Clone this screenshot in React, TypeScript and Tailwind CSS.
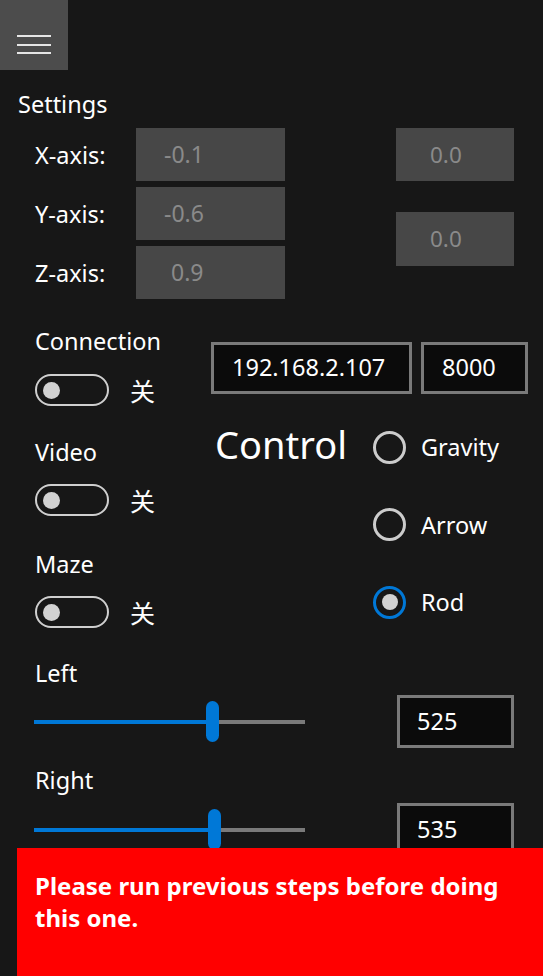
import { useState } from "react";

const font = "font-['Noto_Sans','Noto_Sans_CJK_SC',sans-serif]";

function Toggle() {
  return (
    <div className="flex items-center h-[32px]">
      <div className="w-[74px] h-[32px] rounded-full border-2 border-[#cfcfcf] flex items-center pl-[6px]">
        <div className="w-[17px] h-[17px] rounded-full bg-[#d2d2d2]" />
      </div>
      <span className="ml-[21px] text-[25px] leading-[32px] text-white font-['Noto_Sans_CJK_SC',sans-serif]">关</span>
    </div>
  );
}

function Radio({ label, checked }: { label: string; checked?: boolean }) {
  return (
    <div className="flex items-center h-[40px]">
      {checked ? (
        <div className="w-[33px] h-[33px] rounded-full border-[3.5px] border-[#0078d7] flex items-center justify-center">
          <div className="w-[16px] h-[16px] rounded-full bg-[#d2d2d2]" />
        </div>
      ) : (
        <div className="w-[33px] h-[33px] rounded-full border-[3.5px] border-[#cccccc]" />
      )}
      <span className="ml-[15px] text-[23.5px] leading-[30px]">{label}</span>
    </div>
  );
}

function Slider({ value }: { value: number }) {
  return (
    <div className="ml-[34px] w-[271px] h-[41px] flex items-center">
      <div className="h-[4px] bg-[#0078d7]" style={{ width: value }} />
      <div className="w-[13px] h-[41px] rounded-full bg-[#0078d7]" />
      <div className="h-[4px] flex-1 bg-[#7a7a7a]" />
    </div>
  );
}

function ValueBox({ text }: { text: string }) {
  return (
    <div className="w-[117px] h-[53px] border-[3px] border-[#7a7a7a] bg-[#0b0b0b] flex items-center pl-[17px] text-[23.5px]">
      {text}
    </div>
  );
}

export default function App() {
  const [mode] = useState("Rod");
  const axes = [
    { label: "X-axis:", value: "-0.1", pad: "pl-[28px]" },
    { label: "Y-axis:", value: "-0.6", pad: "pl-[28px]" },
    { label: "Z-axis:", value: "0.9", pad: "pl-[35px]" },
  ];

  return (
    <div className={`relative w-full h-[976px] overflow-hidden bg-[#171717] text-white ${font}`}>
      {/* hamburger */}
      <div className="w-[68px] h-[70px] bg-[#4c4c4c] pt-[35px] pl-[17px] flex flex-col gap-[6.5px]">
        <div className="w-[34px] h-[2px] bg-[#e6e6e6]" />
        <div className="w-[34px] h-[2px] bg-[#e6e6e6]" />
        <div className="w-[34px] h-[2px] bg-[#e6e6e6]" />
      </div>

      <div className="mt-[19px] pl-[18px] text-[23.5px] leading-[30px]">Settings</div>

      {/* axes */}
      <div className="mt-[9px] flex">
        <div className="pl-[35px] flex flex-col gap-[6px]">
          {axes.map((a) => (
            <div key={a.label} className="flex items-center">
              <div className="w-[101px] text-[23.5px] leading-[30px]">{a.label}</div>
              <div className={`w-[149px] h-[53px] bg-[#474747] flex items-center ${a.pad} text-[23px] text-[#8a8a8a]`}>
                {a.value}
              </div>
            </div>
          ))}
        </div>
        <div className="ml-[111px] flex flex-col gap-[31px]">
          <div className="w-[118px] h-[53px] bg-[#474747] flex items-center pl-[34px] text-[22.5px] text-[#8a8a8a]">0.0</div>
          <div className="w-[118px] h-[54px] bg-[#474747] flex items-center pl-[34px] text-[22.5px] text-[#8a8a8a]">0.0</div>
        </div>
      </div>

      {/* connection + control */}
      <div className="mt-[27px] flex">
        <div className="pl-[35px] w-[211px] flex flex-col">
          <div className="text-[23.5px] leading-[30px]">Connection</div>
          <div className="mt-[18px]"><Toggle /></div>
          <div className="mt-[31px] text-[23.5px] leading-[30px]">Video</div>
          <div className="mt-[17px]"><Toggle /></div>
          <div className="mt-[33px] text-[23.5px] leading-[30px]">Maze</div>
          <div className="mt-[17px]"><Toggle /></div>
        </div>
        <div className="flex flex-col">
          <div className="mt-[16px] flex gap-[9px]">
            <div className="w-[201px] h-[52px] border-[3px] border-[#7a7a7a] bg-[#0b0b0b] flex items-center pl-[18px] text-[23.5px]">
              192.168.2.107
            </div>
            <div className="w-[107px] h-[52px] border-[3px] border-[#7a7a7a] bg-[#0b0b0b] flex items-center pl-[18px] text-[23.5px]">
              8000
            </div>
          </div>
          <div className="mt-[33px] flex">
            <div className="w-[162px] pl-[4px] text-[38px] leading-[40px] -mt-[3px]">Control</div>
            <div className="flex flex-col gap-[37.5px]">
              {["Gravity", "Arrow", "Rod"].map((m) => (
                <Radio key={m} label={m} checked={m === mode} />
              ))}
            </div>
          </div>
        </div>
      </div>

      {/* sliders */}
      <div className="mt-[30px] pl-[35px] text-[23.5px] leading-[30px]">Left</div>
      <div className="mt-[7px] h-[53px] flex items-center">
        <Slider value={172} />
        <div className="ml-[92px]"><ValueBox text="525" /></div>
      </div>
      <div className="mt-[17px] pl-[35px] text-[23.5px] leading-[30px]">Right</div>
      <div className="mt-[8px] h-[53px] flex items-center">
        <Slider value={174} />
        <div className="ml-[92px]"><ValueBox text="535" /></div>
      </div>

      {/* error banner */}
      <div className="absolute left-[17px] top-[848px] right-0 bottom-0 bg-[#ff0000] pl-[18px] pr-[18px] pt-[22px]">
        <p className="text-[24px] leading-[32px] font-bold">Please run previous steps before doing this one.</p>
      </div>
    </div>
  );
}
